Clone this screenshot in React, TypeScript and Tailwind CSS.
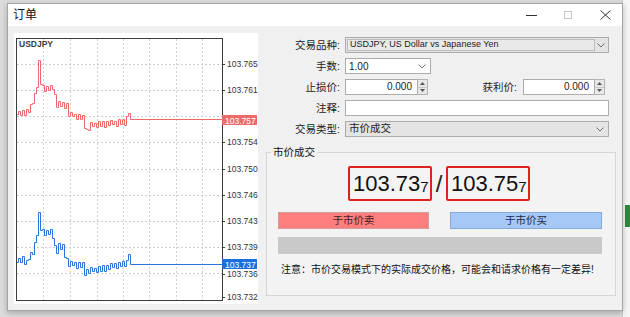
import React from 'react';

// Order dialog with tick chart on the left and the market-order form on the right

type Key = [number, number];

const redKeys: Key[] = [
  [17, 114], [22, 113], [27, 111], [30, 107], [33, 100], [36, 84], [38, 63], [40, 82], [42, 88],
  [52, 88], [54, 96], [56, 104], [66, 105], [68, 114], [82, 118], [84, 125], [86, 131], [90, 125],
  [110, 123], [124, 122], [126, 118], [128, 113], [130, 119],
];

const blueKeys: Key[] = [
  [17, 262], [22, 259], [26, 262], [28, 257], [32, 253], [35, 240], [38, 215], [40, 228], [42, 232],
  [51, 232], [53, 242], [55, 252], [58, 246], [62, 247], [65, 258], [68, 264], [82, 265], [84, 272],
  [90, 270], [100, 269], [110, 266], [122, 264], [126, 262], [128, 254], [130, 264],
];

const jitter = [-3, 2, -3, 3, -2, 2, -3, 1, -2, 3];

function interp(keys: Key[], x: number) {
  for (let i = 0; i < keys.length - 1; i++) {
    const [x0, y0] = keys[i];
    const [x1, y1] = keys[i + 1];
    if (x >= x0 && x <= x1) return y0 + ((y1 - y0) * (x - x0)) / (x1 - x0);
  }
  return keys[keys.length - 1][1];
}

function tickPath(keys: Key[]) {
  let d = `M17 ${Math.round(interp(keys, 17)) + 0.5}`;
  let i = 0;
  for (let x = 18; x <= 130; x += 2) {
    const base = interp(keys, x);
    const y = x > 126 ? base : base + jitter[i++ % jitter.length];
    d += ` H${x + 0.5} V${Math.round(y) + 0.5}`;
  }
  d += ' H222';
  return d;
}

const gridY = [64, 90, 116, 142, 169, 195, 221, 247, 273];
const gridX = [43, 70, 97, 123, 149, 176, 202];
const axis: [string, number][] = [
  ['103.765', 64], ['103.761', 90], ['103.754', 142], ['103.750', 169], ['103.746', 195],
  ['103.743', 221], ['103.739', 247], ['103.736', 274], ['103.732', 297],
];

function Chart() {
  return (
    <svg width={244} height={271} viewBox="14 33 244 271" className="block">
      <rect x={14} y={33} width={244} height={271} fill="#ffffff" />
      {gridY.map((y) => (
        <line key={y} x1={17} x2={222} y1={y + 0.5} y2={y + 0.5} stroke="#cfcfcf" strokeDasharray="2 2" />
      ))}
      {gridX.map((x) => (
        <line key={x} x1={x + 0.5} x2={x + 0.5} y1={39} y2={300} stroke="#cfcfcf" strokeDasharray="2 2" />
      ))}
      <rect x={16.5} y={38.5} width={206} height={262} fill="none" stroke="#3c3c3c" />
      <text x={19} y={47} fontSize={8.5} fontWeight={700} fill="#3a3a3a" fontFamily="Liberation Sans, sans-serif">
        USDJPY
      </text>
      <path d={tickPath(redKeys)} fill="none" stroke="#ee6a6a" strokeWidth={1} />
      <path d={tickPath(blueKeys)} fill="none" stroke="#2f73d8" strokeWidth={1} />
      {axis.map(([t, y]) => (
        <g key={t}>
          <line x1={222} x2={225} y1={y + 0.5} y2={y + 0.5} stroke="#3c3c3c" />
          <text x={227} y={y + 3} fontSize={8.5} fill="#333" fontFamily="Liberation Sans, sans-serif">
            {t}
          </text>
        </g>
      ))}
      <rect x={222} y={115} width={35} height={10} fill="#ef6b6b" />
      <text x={225} y={123.5} fontSize={8.5} fill="#fff" fontFamily="Liberation Sans, sans-serif">
        103.757
      </text>
      <rect x={222} y={259} width={35} height={10} fill="#1c6fe0" />
      <text x={225} y={267.5} fontSize={8.5} fill="#fff" fontFamily="Liberation Sans, sans-serif">
        103.737
      </text>
    </svg>
  );
}

function Chevron() {
  return (
    <svg width={8} height={5} viewBox="0 0 8 5">
      <path d="M0.5 0.5 L4 4 L7.5 0.5" fill="none" stroke="#6e6e6e" strokeWidth={1} />
    </svg>
  );
}

function Spin() {
  return (
    <div className="w-[10px] h-full flex flex-col border border-l-0 border-[#b4b4b4] bg-[#e8e8e8]">
      <div className="flex-1 flex items-center justify-center border-b border-[#c8c8c8]">
        <svg width={5} height={3} viewBox="0 0 5 3">
          <path d="M0 3 L2.5 0 L5 3 Z" fill="#555" />
        </svg>
      </div>
      <div className="flex-1 flex items-center justify-center">
        <svg width={5} height={3} viewBox="0 0 5 3">
          <path d="M0 0 L2.5 3 L5 0 Z" fill="#555" />
        </svg>
      </div>
    </div>
  );
}

function Label({ children }: { children: React.ReactNode }) {
  return <div className="w-[78px] text-right text-[#222] leading-[16px]">{children}</div>;
}

function PriceBox({ main, last }: { main: string; last: string }) {
  return (
    <div className="h-[35px] w-[84px] border-2 border-[#e0201c] rounded-[2px] bg-[#f4f4f4] flex items-end pl-[3px] pb-[2px]">
      <span className="text-[22px] leading-[26px] text-[#111]">{main}</span>
      <span className="text-[15px] leading-[20px] text-[#111]">{last}</span>
    </div>
  );
}

export default function App() {
  return (
    <div className="relative w-[630px] h-[317px] overflow-hidden bg-[#dcdcdc] pt-[3px] pl-[7px] font-['Liberation_Sans','Noto_Sans_CJK_SC',sans-serif] text-[10.5px]">
      {/* desktop bits to the right of the dialog */}
      <div className="absolute right-0 top-0 w-[8px] h-[317px] bg-[#f6f6f6] border-l border-[#cfcfcf]" />
      <div className="absolute right-0 top-[205px] w-[5px] h-[22px] bg-[#2f8a3a]" />

      <div className="relative w-[616px] h-[308px] border border-[#a6a6a6] bg-[#f0f0f0] flex flex-col shadow-[0_2px_6px_rgba(0,0,0,0.25)]">
        {/* Title bar */}
        <div className="h-[22px] bg-white flex items-center">
          <span className="pl-[5px] text-[12px] text-[#111]">订单</span>
          <div className="ml-auto flex items-center">
            <div className="w-[11px] h-px bg-[#333] mr-[27px]" />
            <div className="w-[8px] h-[8px] border border-[#c8c8c8] mr-[28px]" />
            <svg width={11} height={10} viewBox="0 0 11 10" className="mr-[11px]">
              <path d="M0.5 0.5 L10.5 9.5 M10.5 0.5 L0.5 9.5" stroke="#333" strokeWidth={1} />
            </svg>
          </div>
        </div>

        {/* Body */}
        <div className="flex-1 flex items-start">
          <div className="mt-[7px] ml-[6px]">
            <Chart />
          </div>

          <div className="ml-[4px] mt-[11px] flex flex-col">
            <div className="flex flex-col gap-[5px]">
              <div className="flex items-center gap-[5px] h-[16px]">
                <Label>交易品种:</Label>
                <div className="w-[264px] h-[16px] border border-[#acacac] bg-[#e4e4e4] flex items-center p-px">
                  <div className="w-[248px] h-full border border-[#bdbdbd] bg-[#e9e9e9] flex items-center pl-[2px] text-[9px] text-[#222]">
                    USDJPY, US Dollar vs Japanese Yen
                  </div>
                  <div className="flex-1 flex justify-center">
                    <Chevron />
                  </div>
                </div>
              </div>

              <div className="flex items-center gap-[5px] h-[16px]">
                <Label>手数:</Label>
                <div className="w-[86px] h-[16px] border border-[#acacac] bg-white flex items-center pl-[3px] pr-[4px] text-[10px] text-[#222]">
                  1.00
                  <div className="ml-auto">
                    <Chevron />
                  </div>
                </div>
              </div>

              <div className="flex items-center gap-[5px] h-[16px]">
                <Label>止损价:</Label>
                <div className="flex h-[16px]">
                  <div className="w-[73px] h-full border border-[#acacac] bg-white text-right pr-[5px] text-[10px] leading-[14px] text-[#222]">
                    0.000
                  </div>
                  <Spin />
                </div>
                <div className="w-[84px] text-right text-[#222] leading-[16px]">获利价:</div>
                <div className="flex h-[16px] ml-[1px]">
                  <div className="w-[72px] h-full border border-[#acacac] bg-white text-right pr-[5px] text-[10px] leading-[14px] text-[#222]">
                    0.000
                  </div>
                  <Spin />
                </div>
              </div>

              <div className="flex items-center gap-[5px] h-[16px]">
                <Label>注释:</Label>
                <div className="w-[264px] h-[16px] border border-[#acacac] bg-white" />
              </div>

              <div className="flex items-center gap-[5px] h-[16px]">
                <Label>交易类型:</Label>
                <div className="w-[264px] h-[16px] border border-[#acacac] bg-[#e4e4e4] flex items-center pl-[3px] pr-[4px] text-[#222]">
                  市价成交
                  <div className="ml-auto">
                    <Chevron />
                  </div>
                </div>
              </div>
            </div>

            {/* Market execution group */}
            <fieldset className="mt-[9px] ml-[4px] w-[350px] h-[150px] border border-[#d6d6d6] bg-[#f3f3f3] px-0">
              <legend className="ml-[4px] px-[2px] text-[#111] leading-[12px]">市价成交</legend>
              <div className="px-[11px]">
                <div className="flex items-center pl-[70px] mt-[8px]">
                  <PriceBox main="103.73" last="7" />
                  <span className="w-[14px] text-center text-[24px] leading-[30px] text-[#222]">/</span>
                  <PriceBox main="103.75" last="7" />
                </div>
                <div className="flex mt-[11px] gap-[21px]">
                  <div className="w-[151px] h-[17px] bg-[#ff7f7f] border border-[#d79a9a] flex items-center justify-center text-[#4a1c1c]">
                    于市价卖
                  </div>
                  <div className="w-[152px] h-[17px] bg-[#a6c8f6] border border-[#86a9d8] flex items-center justify-center text-[#1c2c4a]">
                    于市价买
                  </div>
                </div>
                <div className="mt-[8px] w-[324px] h-[17px] bg-[#c9c9c9]" />
                <div className="mt-[8px] pl-[3px] text-[10px] text-[#111]">
                  注意：市价交易模式下的实际成交价格，可能会和请求价格有一定差异!
                </div>
              </div>
            </fieldset>
          </div>
        </div>
      </div>
    </div>
  );
}
